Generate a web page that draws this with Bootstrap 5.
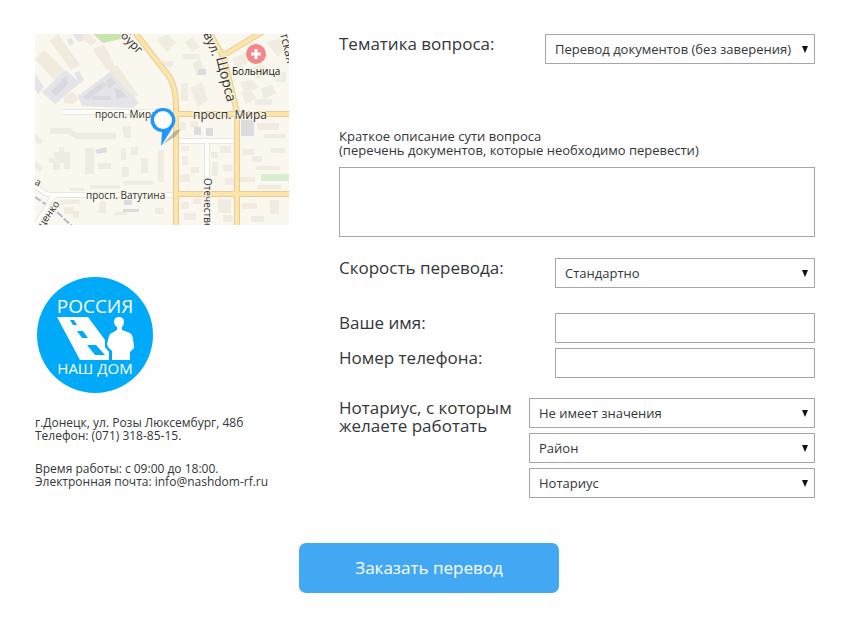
<!DOCTYPE html>
<html lang="ru">
<head>
<meta charset="utf-8">
<meta name="viewport" content="width=device-width, initial-scale=1">
<title>Заказать перевод</title>
<link href="https://cdn.jsdelivr.net/npm/bootstrap@5.3.0/dist/css/bootstrap.min.css" rel="stylesheet">
<style>
  body { background: #fefefe; color: #33373b; font-family: "Open Sans", "Noto Sans", sans-serif; font-weight: 400; font-size: 13px; line-height: 14px; }
  .page { padding: 34px 47px 30px 35px; }
  .layout { display: grid; grid-template-columns: 254px minmax(0, 1fr); column-gap: 50px; }
  @media (max-width: 700px) { .layout { grid-template-columns: minmax(0, 1fr); row-gap: 32px; } }
  .map-view { width: 254px; height: 191px; }
  .brand { width: 120px; height: 120px; margin-top: 50px; }
  .contacts { font-size: 12px; line-height: 13px; margin-top: 21px; }
  .contacts p { margin-bottom: 20px; }
  .contacts a { color: inherit; text-decoration: none; }
  .field-label { font-size: 17px; line-height: 18px; padding-top: 1px; }
  .field { border: 1px solid #a6a6a6; border-radius: 0; background-color: #fefefe; color: #33373b; font-size: 13px; line-height: 18px; font-weight: 400; padding: 5px 9px; height: 30px; }
  select.field { padding-right: 16px; background-image: url("data:image/svg+xml,%3Csvg xmlns='http://www.w3.org/2000/svg' viewBox='0 0 6 7'%3E%3Cpath fill='%23111' d='M0 0h6L3 7z'/%3E%3C/svg%3E"); background-size: 6px 7px; background-position: right 6px center; }
  textarea.field { height: 70px; resize: none; }
  .w-topic { flex: 0 0 270px; }
  .w-std { flex: 0 0 260px; }
  .w-notary { flex: 0 0 286px; }
  .topic-row { margin-bottom: 65px; }
  .note { margin-bottom: 10px; }
  .speed-row { margin: 21px 0 25px; }
  .phone-row { margin: 5px 0 20px; }
  .stack { gap: 5px; }
  .order { width: 260px; height: 50px; border-radius: 7px; background: #42a8f4; color: #fff; font-size: 17px; }
  .order-row { margin-top: 45px; padding-left: 8px; }
  .order:hover { background: #2f98e6; color: #fff; }
</style>
</head>
<body>
<main class="page">
  <form>
    <div class="layout">
      <aside>
        <svg class="map-view d-block" viewBox="35 34 254 191" role="img" aria-label="Карта проезда" font-family="Open Sans, Noto Sans, sans-serif" font-weight="400" fill="#333">
          <rect x="35" y="34" width="254" height="191" fill="#faf7ee"/>
          <path fill="#f0eadf" d="M35 59l9-9 32 31-12 10zM50 41l8-7 22 31-9 5zM80 34h9l8 7-7 5zM93 49l11-4 5 8 6 15-8 2-10-14zM109 70l8-5 21 30-7 5zM64 97l8-5 7 6-6 6-9-1z"/>
          <path fill="#c9e4af" d="M93 34h33l-1 4-22 5z"/>
          <path fill="#e4e4e9" d="M72 34l10 0 2 6-5 2zM35 74l9 13-6 7-3-5zM42 92l24-22 14 13-25 21zM78 96l32-24 29 31-7 5-50-2zM74 73l5-2 5 9-4 4zM67 40l4-2 3 5-4 3z"/>
          <path fill="#d9d9df" d="M51 91l14-12 4 4-13 13zM83 97l20-16 3 4-18 15zM106 80l6-2 4 5-7 6zM92 96h19v4H92zM114 88l7 2 6 7-10 2zM61 80l5-4 2 3-4 5z"/>
          <g fill="#f0ece2">
            <path d="M35 133l8 8-3 4-5-4zM50 128h20l7 5h39v6H76l-8-5H50zM122 126h9v12h-7zM121 148h5v12h-5zM131 147h7v8h-7zM52 152h7v-5h5v5h6v17h-6v-6h-4v7h-7v-7h-4v-5h6zM85 148h9v26h-9zM98 163h13v6H98zM122 167h7v10h-7zM141 158h7v15h-7zM158 150h6v32h-6zM70 188h14v3H70zM90 185h30v4H90zM123 181h30v4h-30zM35 160l8 7-3 5-5-4zM60 200h20v4H60zM64 207h10v7h-10zM100 201h6v12h-8zM115 212h12v3h-12zM73 211h6v7h-6zM155 208h9v6h-9z"/>
            <path d="M156 39l12-5 8 9-9 9zM162 61h11v6h-11zM182 54h18v5h-16zM181 83h7v18h-7zM190 88l12-6 6 18-10 7zM193 63l7-4 5 10-9 7zM185 42l7-4 8 9-8 5zM232 59l11-5 5 8-10 8zM248 70l14-6 8 8-12 7zM261 88l11-3 4 8-12 7zM240 82l11-3 8 8-14 7zM255 99h17v6h-17zM276 72h10v10h-10zM266 42l13-3 6 10-7 8zM241 92l9-4 6 10-10 6z"/>
            <path d="M181 146h8v5h-8zM182 156h6v9h-6zM180 174h10v8h-10zM191 167h8v6h-8zM211 152h7v6h-7zM220 146h11v7h-11zM212 162h6v14h-6zM223 165h10v6h-10zM225 178h9v7h-9zM242 149h12v6h-12zM252 156h10v6h-10zM256 166h24v4h-24zM271 148h14v5h-14zM240 177h15v5h-15zM257 185h24v4h-24zM181 202h8v7h-8zM184 213h12v7h-12zM218 199h13v14h-13zM223 215h10v7h-10zM242 203h15v6h-15zM270 200h9v14h-9zM251 216h13v6h-13zM193 198h8v6h-8z"/>
            <path d="M180 122h6v8h-6zM190 121h8v6h-8zM257 123h22v7h-22zM264 134h22v4h-22z"/>
          </g>
          <path fill="#dcdce0" d="M198 69h8v6h-8zM194 127h7v8h-7zM206 128h7v8h-7zM241 119h13v17h-13zM124 200h8v5h-8zM123 209h16v3h-16zM95 150l11-3 1 5-10 2z"/>
          <path fill="#d9edd0" d="M261 174h28v7h-28z"/>
          <g fill="none">
            <path stroke="#b8b8c8" stroke-width="2" stroke-dasharray="7 2" d="M35 197l22 15 15 14"/>
            <path stroke="#d9d4cb" stroke-width="5" d="M62 112h112M35 187c8 3 10 8 17 8h123M58 195q-6 0-10 10l-12 20M178 141h58M207 141v84"/>
            <path stroke="#fff" stroke-width="4" d="M62 112h112M35 187c8 3 10 8 17 8h123M58 195q-6 0-10 10l-12 20M178 141h58M207 141v84"/>
            <path stroke="#e9c99d" stroke-width="6" d="M133 30l31 40q13 12 12 42v114M176 114h113M174 194h115M208 30l16 28 13 54v114M224 55l40-24"/>
            <path stroke="#fbe6a8" stroke-width="4" d="M133 30l31 40q13 12 12 42v114M176 114h113M174 194h115M208 30l16 28 13 54v114M224 55l40-24"/>
          </g>
          <g stroke="#faf7ee" stroke-width="2" stroke-opacity=".8" paint-order="stroke">
            <text x="95" y="118" font-size="10">просп. Мира</text>
            <text x="193" y="119" font-size="12">просп. Мира</text>
            <text x="86" y="199" font-size="10">просп. Ватутина</text>
            <text x="232" y="75" font-size="10" fill="#111">Больница</text>
            <text transform="translate(203 34) rotate(67)" font-size="13">вул.</text>
            <text transform="translate(216 58) rotate(76)" font-size="14">Щорса</text>
            <text transform="translate(120 36) rotate(46)" font-size="12">бург</text>
            <text transform="translate(280 34) rotate(76)" font-size="12">тская</text>
            <text transform="translate(204 178) rotate(90)" font-size="10">Отечественная</text>
            <text transform="translate(43 228) rotate(-55)" font-size="10">ценко</text>
            <text transform="translate(34 184) rotate(28)" font-size="10">а</text>
          </g>
          <circle cx="256" cy="54" r="10" fill="#f58588"/>
          <path stroke="#fff" stroke-width="3" d="M251 54h10M256 49v10"/>
          <path fill="#555" fill-opacity=".35" d="M162 145l13-14 6-2-5 7z"/>
          <path fill="#1e98ff" d="M163 108a12 12 0 0 1 10 19l-12 19 1-14a12 12 0 0 1 1-24z"/>
          <circle cx="163" cy="120" r="9" fill="#fff"/>
        </svg>
        <svg class="brand d-block" viewBox="0 0 120 120" role="img" aria-label="Россия Наш дом">
          <circle cx="60" cy="60" r="58" fill="#00aaf9"/>
          <g fill="#fff" font-family="Open Sans, Noto Sans, sans-serif" font-weight="400">
            <text x="60" y="38" font-size="19" text-anchor="middle">РОССИЯ</text>
            <text x="60" y="99" font-size="15" text-anchor="middle">НАШ ДОМ</text>
            <path fill-rule="evenodd" d="M22 42h31l17 23v7l4 5v8H45zM35 45l3 5h4l-3-5zM42 56l5 7h6l-5-7zM52 70l8 10h10l-9-10z"/>
            <path d="M84 42q5 0 5 5 0 3-2 5v3l8 3q2 1 3 5l1 10-4 4v8H77V76l-4-4-1-3 2-8q1-3 3-3l5-3v-3q-3-2-3-5 0-5 5-5z"/>
          </g>
        </svg>
        <address class="contacts mb-0">
          <p>г.Донецк, ул. Розы Люксембург, 48б<br>Телефон: (071) 318-85-15.</p>
          <p class="mb-0">Время работы: с 09:00 до 18:00.<br>Электронная почта: <a href="mailto:info@nashdom-rf.ru">info@nashdom-rf.ru</a></p>
        </address>
      </aside>
      <section>
        <div class="topic-row d-flex justify-content-between">
          <label class="field-label" for="topic">Тематика вопроса:</label>
          <select class="form-select field w-topic" id="topic"><option>Перевод документов (без заверения)</option></select>
        </div>
        <label class="note d-block" for="details">Краткое описание сути вопроса<br>(перечень документов, которые необходимо перевести)</label>
        <textarea class="form-control field" id="details"></textarea>
        <div class="speed-row d-flex justify-content-between">
          <label class="field-label" for="speed">Скорость перевода:</label>
          <select class="form-select field w-std" id="speed"><option>Стандартно</option></select>
        </div>
        <div class="d-flex justify-content-between">
          <label class="field-label" for="name">Ваше имя:</label>
          <input class="form-control field w-std" id="name" type="text">
        </div>
        <div class="phone-row d-flex justify-content-between">
          <label class="field-label" for="phone">Номер телефона:</label>
          <input class="form-control field w-std" id="phone" type="tel">
        </div>
        <div class="d-flex justify-content-between">
          <label class="field-label text-nowrap" for="notary-pref">Нотариус, с которым<br>желаете работать</label>
          <div class="stack w-notary d-flex flex-column">
            <select class="form-select field" id="notary-pref"><option>Не имеет значения</option></select>
            <select class="form-select field" aria-label="Район"><option>Район</option></select>
            <select class="form-select field" aria-label="Нотариус"><option>Нотариус</option></select>
          </div>
        </div>
      </section>
    </div>
    <div class="order-row d-flex justify-content-center">
      <button class="btn order border-0" type="submit">Заказать перевод</button>
    </div>
  </form>
</main>
<script src="https://cdn.jsdelivr.net/npm/bootstrap@5.3.0/dist/js/bootstrap.bundle.min.js"></script>
</body>
</html>
